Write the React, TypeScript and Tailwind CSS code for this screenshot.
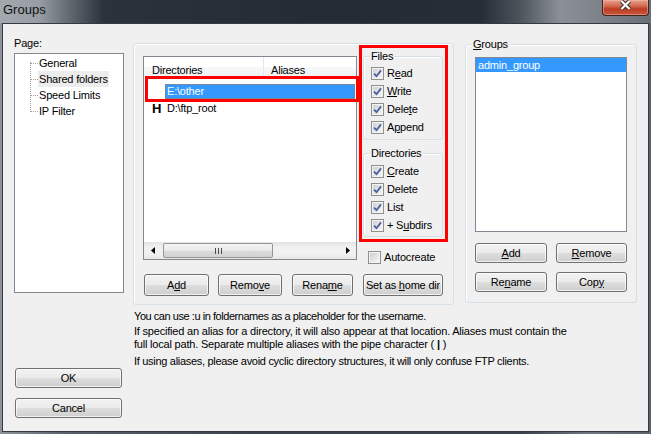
import React from "react";

const U = ({ c }: { c: string }) => <span className="underline underline-offset-[1px]">{c}</span>;

function Check({ checked = true }: { checked?: boolean }) {
  return (
    <span className="relative flex h-[13px] w-[13px] shrink-0 items-center justify-center border border-[#8e8f8f] bg-[#f4f4f4]">
      <span className="absolute inset-[1px] bg-[linear-gradient(135deg,#cfd0d2_0%,#e3e4e6_50%,#f6f6f6_100%)]" />
      {checked && (
        <svg className="relative" width="9" height="9" viewBox="0 0 9 9">
          <path d="M1 4.6 L3.5 7.2 L8 1.4" fill="none" stroke="#4a5f9c" strokeWidth="1.8" />
        </svg>
      )}
    </span>
  );
}

function CbRow({ children, checked = true }: { children: React.ReactNode; checked?: boolean }) {
  return (
    <div className="flex h-[18px] items-center gap-[3px]">
      <Check checked={checked} />
      <span className="whitespace-pre leading-[13px]">{children}</span>
    </div>
  );
}

function Btn({ children, className }: { children: React.ReactNode; className: string }) {
  return (
    <div
      className={
        "flex shrink-0 items-center justify-center rounded-[3px] border border-[#707070] bg-[linear-gradient(180deg,#f2f2f2_0%,#ebebeb_48%,#dddddd_52%,#cfcfcf_100%)] shadow-[inset_0_0_0_1px_rgba(255,255,255,0.7)] leading-[13px] " +
        className
      }
    >
      <span className="whitespace-pre">{children}</span>
    </div>
  );
}

function LeftArrow() {
  return (
    <svg width="4" height="7" viewBox="0 0 4 7">
      <path d="M4 0 L0 3.5 L4 7 Z" fill="#000" />
    </svg>
  );
}
function RightArrow() {
  return (
    <svg width="4" height="7" viewBox="0 0 4 7">
      <path d="M0 0 L4 3.5 L0 7 Z" fill="#000" />
    </svg>
  );
}

export default function App() {
  return (
    <div className="flex h-[434px] w-[651px] flex-col overflow-hidden bg-[linear-gradient(90deg,#8d9399_0%,#5a6168_10%,#3a4149_40%,#3a4149_80%,#6f757c_90%,#5d636a_100%)] font-['Liberation_Sans',Arial,sans-serif] text-[11px] leading-[13px] tracking-[-0.2px] text-black">
      {/* title bar */}
      <div className="flex h-[23px] shrink-0 items-start justify-between bg-[linear-gradient(90deg,#a3a9ae_0%,#979da3_6%,#5d656d_11%,#2a323b_16%,#232b34_50%,#252d36_74%,#4d555d_80%,#8a9096_86%,#7d8389_92%,#6a7077_100%)]">
        <div className="pl-[3px] pt-[2px] text-[13px] leading-[16px] tracking-[0px] text-[#111]">Groups</div>
        <div className="mr-[2px] flex h-[16px] w-[47px] items-start justify-center rounded-b-[4px] border border-t-0 border-[#3f2420] bg-[linear-gradient(180deg,#e7a291_0%,#d26a52_40%,#bb3c22_60%,#c9563c_100%)] shadow-[inset_0_0_0_1px_rgba(255,190,175,0.45)]">
          <svg width="13" height="10" viewBox="0 0 13 10">
            <path d="M2.5 1 L10.5 9 M10.5 1 L2.5 9" stroke="#3a3030" strokeWidth="4.2" />
            <path d="M2.5 1 L10.5 9 M10.5 1 L2.5 9" stroke="#ffffff" strokeWidth="2.2" />
          </svg>
        </div>
      </div>

      {/* client area */}
      <div className="mx-[2px] mb-[2px] flex flex-1 border border-[#343a41] bg-[#f0f0f0]">
        {/* left column */}
        <div className="ml-[11px] flex w-[110px] flex-col">
          <div className="mt-[13px] h-[13px]">Page:</div>
          <div className="relative mt-[3px] h-[240px] w-[110px] border border-[#828790] bg-white pt-[1px]">
            <div className="absolute left-[15px] top-[8px] h-[50px] border-l border-dotted border-[#a0a0a0]" />
            {[
              { t: "General", sel: false },
              { t: "Shared folders", sel: true },
              { t: "Speed Limits", sel: false },
              { t: "IP Filter", sel: false },
            ].map((it) => (
              <div key={it.t} className="flex h-[16px] items-center">
                <span className="ml-[16px] w-[7px] border-t border-dotted border-[#a0a0a0]" />
                <span className={"flex h-[16px] items-center px-[1px] " + (it.sel ? "bg-[#ececec]" : "")}>{it.t}</span>
              </div>
            ))}
          </div>
          <Btn className="ml-[1px] mt-[75px] h-[20px] w-[107px] border-[#3c7fb1] shadow-[inset_0_0_0_1px_#b6e3fb]">OK</Btn>
          <Btn className="ml-[1px] mt-[10px] h-[20px] w-[107px]">Cancel</Btn>
        </div>

        {/* main */}
        <div className="ml-[9px] flex flex-col">
          <div className="flex items-start">
            {/* shared folders group */}
            <div className="mt-[19px] flex h-[262px] w-[321px] flex-col rounded-[3px] border border-[#d5dfe5] shadow-[inset_1px_1px_0_#ffffff]">
              <div className="flex items-start pl-[9px] pt-[1px]">
                {/* list view */}
                <div className="relative mt-[11px] flex h-[204px] w-[214px] flex-col border border-[#828790] bg-white">
                  <div className="flex h-[21px] border-b border-[#e5e5e5] bg-[linear-gradient(180deg,#ffffff_0%,#ffffff_50%,#f7f8fa_51%,#f1f2f4_100%)]">
                    <div className="w-[120px] border-r border-[#e3e8ee] pl-[8px] pt-[7px]">Directories</div>
                    <div className="pl-[7px] pt-[7px]">Aliases</div>
                  </div>
                  <div className="flex flex-1 flex-col pt-[5px]">
                    <div className="flex h-[17px]">
                      <span className="w-[21px] shrink-0" />
                      <div className="mr-[1px] mt-[1px] h-[15px] flex-1 border border-dotted border-[#b57c3a] bg-[#3399ff] pl-[1px] leading-[13px] text-white">
                        E:\other
                      </div>
                    </div>
                    <div className="flex h-[17px] items-center">
                      <span className="w-[21px] shrink-0 pl-[8px] text-[13px] font-bold leading-[17px]">H</span>
                      <span className="pl-[2px]">D:\ftp_root</span>
                    </div>
                  </div>
                  {/* scrollbar */}
                  <div className="flex h-[17px] bg-[linear-gradient(180deg,#e3e3e3_0%,#f1f1f1_30%,#f1f1f1_70%,#e6e6e6_100%)]">
                    <div className="flex w-[17px] items-center justify-center">
                      <LeftArrow />
                    </div>
                    <div className="flex flex-1 items-center">
                      <div className="ml-[2px] flex h-[15px] w-[110px] items-center justify-center gap-[2px] rounded-[2px] border border-[#969696] bg-[linear-gradient(180deg,#f4f4f4_0%,#e9e9e9_50%,#dadada_51%,#d3d3d3_100%)]">
                        <span className="h-[6px] w-[1px] bg-[#4b4b4b]" />
                        <span className="h-[6px] w-[1px] bg-[#4b4b4b]" />
                        <span className="h-[6px] w-[1px] bg-[#4b4b4b]" />
                      </div>
                    </div>
                    <div className="flex w-[17px] items-center justify-center">
                      <RightArrow />
                    </div>
                  </div>
                  {/* annotation */}
                  <div className="absolute left-[1px] top-[19px] h-[26px] w-[214px] border-[3px] border-[#ff0000]" />
                </div>

                {/* permissions column */}
                <div className="ml-[2px] flex flex-col">
                  <div className="h-[197px] w-[89px] border-[3px] border-[#ff0000] pl-[1px] pt-[8px]">
                    <div className="relative h-[84px] w-[80px] rounded-[3px] border border-[#d5dfe5] pl-[7px] pt-[7px] shadow-[inset_1px_1px_0_#ffffff]">
                      <span className="absolute -top-[7px] left-[6px] bg-[#f0f0f0] px-[1px]">Files</span>
                      <CbRow>
                        R<U c="e" />ad
                      </CbRow>
                      <CbRow>
                        <U c="W" />
                        rite
                      </CbRow>
                      <CbRow>
                        Dele<U c="t" />e
                      </CbRow>
                      <CbRow>
                        A<U c="p" />
                        pend
                      </CbRow>
                    </div>
                    <div className="relative mt-[13px] h-[84px] w-[80px] rounded-[3px] border border-[#d5dfe5] pl-[7px] pt-[8px] shadow-[inset_1px_1px_0_#ffffff]">
                      <span className="absolute -top-[7px] left-[6px] bg-[#f0f0f0] px-[1px]">Directories</span>
                      <CbRow>
                        <U c="C" />
                        reate
                      </CbRow>
                      <CbRow>Delete</CbRow>
                      <CbRow>List</CbRow>
                      <CbRow>
                        {"+ S"}
                        <U c="u" />
                        bdirs
                      </CbRow>
                    </div>
                  </div>
                  <div className="ml-[9px] mt-[6px]">
                    <CbRow checked={false}>Autocreate</CbRow>
                  </div>
                </div>
              </div>

              <div className="mt-[8px] flex pl-[10px]">
                <Btn className="h-[22px] w-[65px]">
                  A<U c="d" />d
                </Btn>
                <Btn className="ml-[9px] h-[22px] w-[64px]">
                  Remo<U c="v" />e
                </Btn>
                <Btn className="ml-[10px] h-[22px] w-[61px]">
                  Rena<U c="m" />e
                </Btn>
                <Btn className="ml-[10px] h-[22px] w-[80px]">
                  {"Set as "}
                  <U c="h" />
                  {"ome dir"}
                </Btn>
              </div>
            </div>

            {/* groups group */}
            <div className="relative ml-[11px] mt-[20px] h-[259px] w-[172px] rounded-[3px] border border-[#d5dfe5] pl-[9px] pt-[12px] shadow-[inset_1px_1px_0_#ffffff]">
              <span className="absolute -top-[7px] left-[6px] bg-[#f0f0f0] px-[1px]">
                <U c="G" />
                roups
              </span>
              <div className="h-[175px] w-[152px] border border-[#828790] bg-white">
                <div className="h-[14px] bg-[#3399ff] pl-[2px] leading-[14px] text-white">admin_group</div>
              </div>
              <div className="mt-[11px] flex">
                <Btn className="h-[20px] w-[72px]">
                  <U c="A" />
                  dd
                </Btn>
                <Btn className="ml-[9px] h-[20px] w-[71px]">
                  <U c="R" />
                  emove
                </Btn>
              </div>
              <div className="mt-[9px] flex">
                <Btn className="h-[20px] w-[72px]">
                  Re<U c="n" />
                  ame
                </Btn>
                <Btn className="ml-[9px] h-[20px] w-[71px]">
                  Cop<U c="y" />
                </Btn>
              </div>
            </div>
          </div>

          <div className="ml-[1px] mt-[5px] whitespace-nowrap">
            <div className="tracking-[-0.45px]">You can use :u in foldernames as a placeholder for the username.</div>
            <div className="mt-[2px]">
              If specified an alias for a directory, it will also appear at that location. Aliases must contain the
              <br />
              full local path. Separate multiple aliases with the pipe character ( <b>|</b> )
            </div>
            <div className="mt-[4px] tracking-[-0.3px]">
              If using aliases, please avoid cyclic directory structures, it will only confuse FTP clients.
            </div>
          </div>
        </div>
      </div>
    </div>
  );
}
